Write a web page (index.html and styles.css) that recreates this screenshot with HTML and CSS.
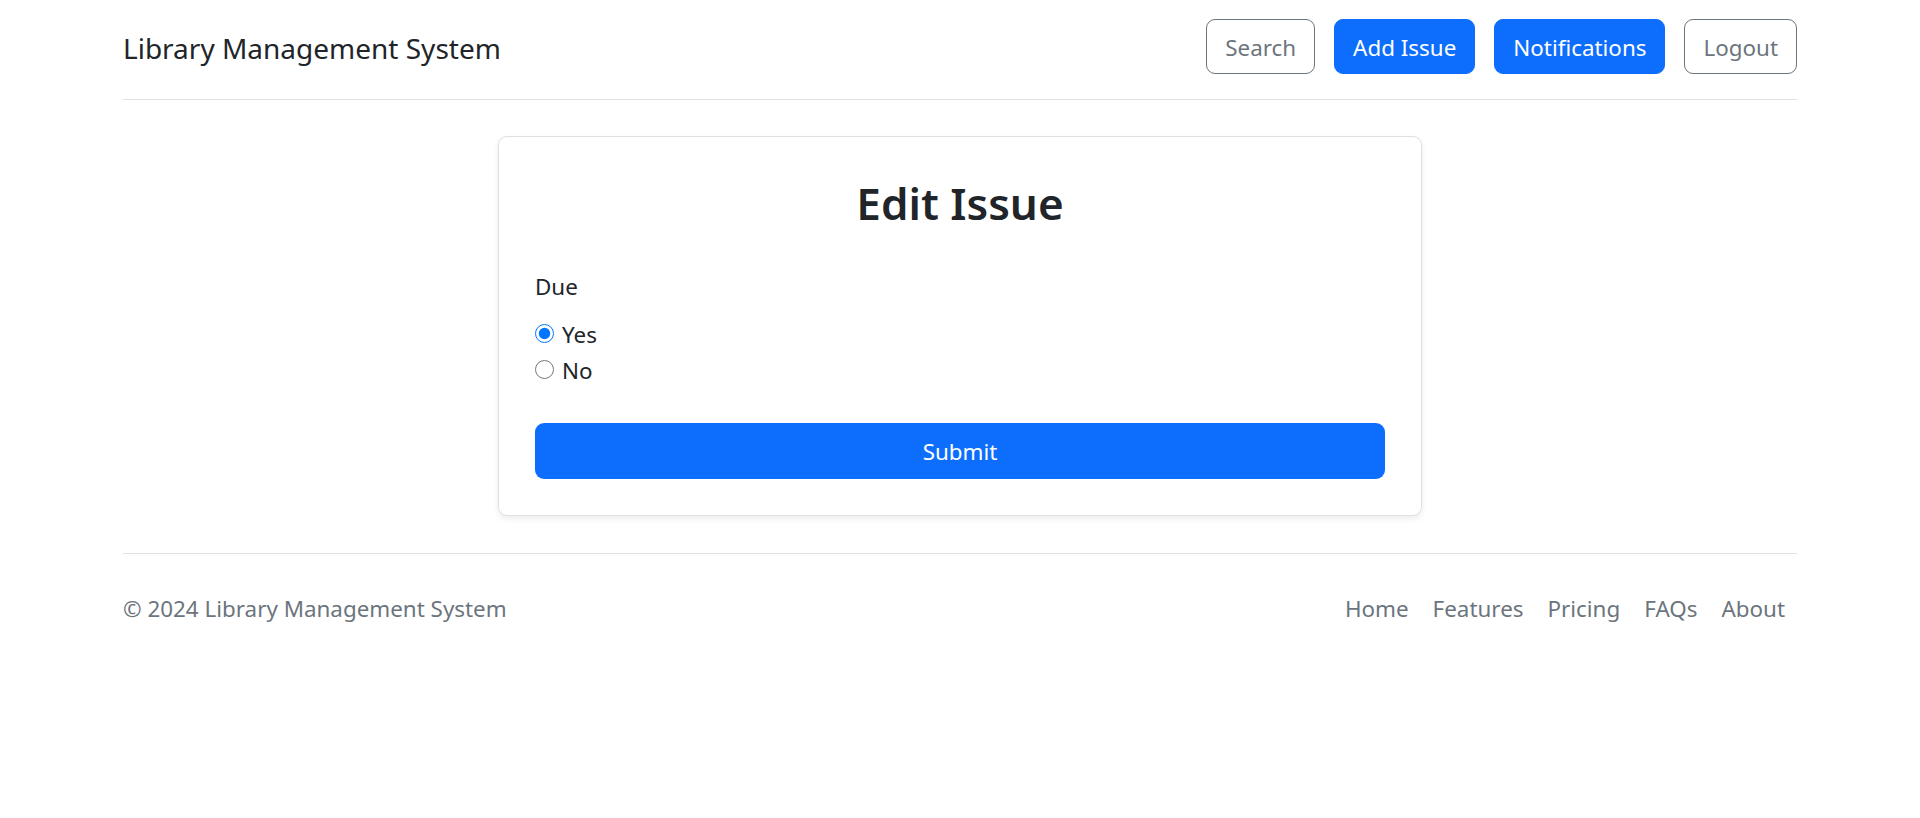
FILE: index.html
```html
<!DOCTYPE html>
<html lang="en">
<head>
<meta charset="utf-8">
<title>Edit Issue - Library Management System</title>
<link rel="stylesheet" href="styles.css">
</head>
<body>
<div class="container">
  <header class="header">
    <span class="brand">Library Management System</span>
    <nav class="actions">
      <a class="btn btn-outline" href="#">Search</a>
      <a class="btn btn-primary" href="#">Add Issue</a>
      <a class="btn btn-primary" href="#">Notifications</a>
      <a class="btn btn-outline" href="#">Logout</a>
    </nav>
  </header>

  <main class="main">
    <div class="card">
      <h2 class="card-title">Edit Issue</h2>
      <form class="form">
        <div class="group">
          <div class="label">Due</div>
          <label class="check"><input class="radio" type="radio" name="due" checked><span>Yes</span></label>
          <label class="check"><input class="radio" type="radio" name="due"><span>No</span></label>
        </div>
        <button class="submit" type="button">Submit</button>
      </form>
    </div>
  </main>

  <footer class="footer">
    <p class="copy">© 2024 Library Management System</p>
    <ul class="links">
      <li><a class="link" href="#">Home</a></li>
      <li><a class="link" href="#">Features</a></li>
      <li><a class="link" href="#">Pricing</a></li>
      <li><a class="link" href="#">FAQs</a></li>
      <li><a class="link" href="#">About</a></li>
    </ul>
  </footer>
</div>
</body>
</html>
```

FILE: styles.css
```css
* { box-sizing: border-box; }

html, body {
  margin: 0;
  padding: 0;
  background: #ffffff;
}

body {
  font-family: "Noto Sans", "Open Sans", sans-serif;
  font-size: 22.4px;
  line-height: 36px;
  color: #212529;
}

.container {
  width: 1674px;
  margin: 0 auto;
}

/* Header */
.header {
  display: flex;
  align-items: center;
  justify-content: space-between;
  padding: 19px 0 25px;
  border-bottom: 1px solid #dee2e6;
}

.brand {
  padding-top: 4px;
  font-size: 28px;
  line-height: 45px;
  color: #212529;
}

.actions {
  display: flex;
  gap: 19px;
}

.btn {
  display: inline-flex;
  align-items: center;
  justify-content: center;
  height: 55px;
  padding: 3px 18px 0;
  border-radius: 9px;
  font-size: 22.4px;
  text-decoration: none;
  border: 1px solid transparent;
}

.btn-outline {
  color: #6c757d;
  border-color: #6c757d;
  background: #fff;
}

.btn-primary {
  color: #fff;
  background: #0d6efd;
  border-color: #0d6efd;
}

/* Card */
.main {
  padding-top: 36px;
}

.card {
  width: 924px;
  margin: 0 auto;
  padding: 37px 36px 36px;
  border: 1px solid #dfe0e2;
  border-radius: 9px;
  background: #fff;
  box-shadow: 0 3px 6px rgba(0, 0, 0, 0.075);
}

.card-title {
  margin: 0 0 37px;
  text-align: center;
  font-size: 44px;
  line-height: 58px;
  font-weight: 600;
  color: #212529;
}

.form {
  margin: 0;
}

.group {
  display: flex;
  flex-direction: column;
  margin-bottom: 34px;
}

.label {
  margin-bottom: 12px;
}

.check {
  display: flex;
  align-items: center;
  gap: 8px;
}

.radio {
  width: 19px;
  height: 19px;
  margin: -3px 0 0;
}

.submit {
  display: block;
  width: 100%;
  height: 56px;
  border: 0;
  border-radius: 9px;
  background: #0d6efd;
  color: #fff;
  font-family: inherit;
  font-size: 22.4px;
}

/* Footer */
.footer {
  display: flex;
  align-items: center;
  justify-content: space-between;
  margin-top: 37px;
  padding: 25px 0 24px;
  border-top: 1px solid #dee2e6;
}

.copy {
  margin: 0;
  color: #6c757d;
}

.links {
  display: flex;
  margin: 0;
  padding: 0;
  list-style: none;
}

.link {
  display: block;
  padding: 12px 12px;
  color: #6c757d;
  text-decoration: none;
}
```
